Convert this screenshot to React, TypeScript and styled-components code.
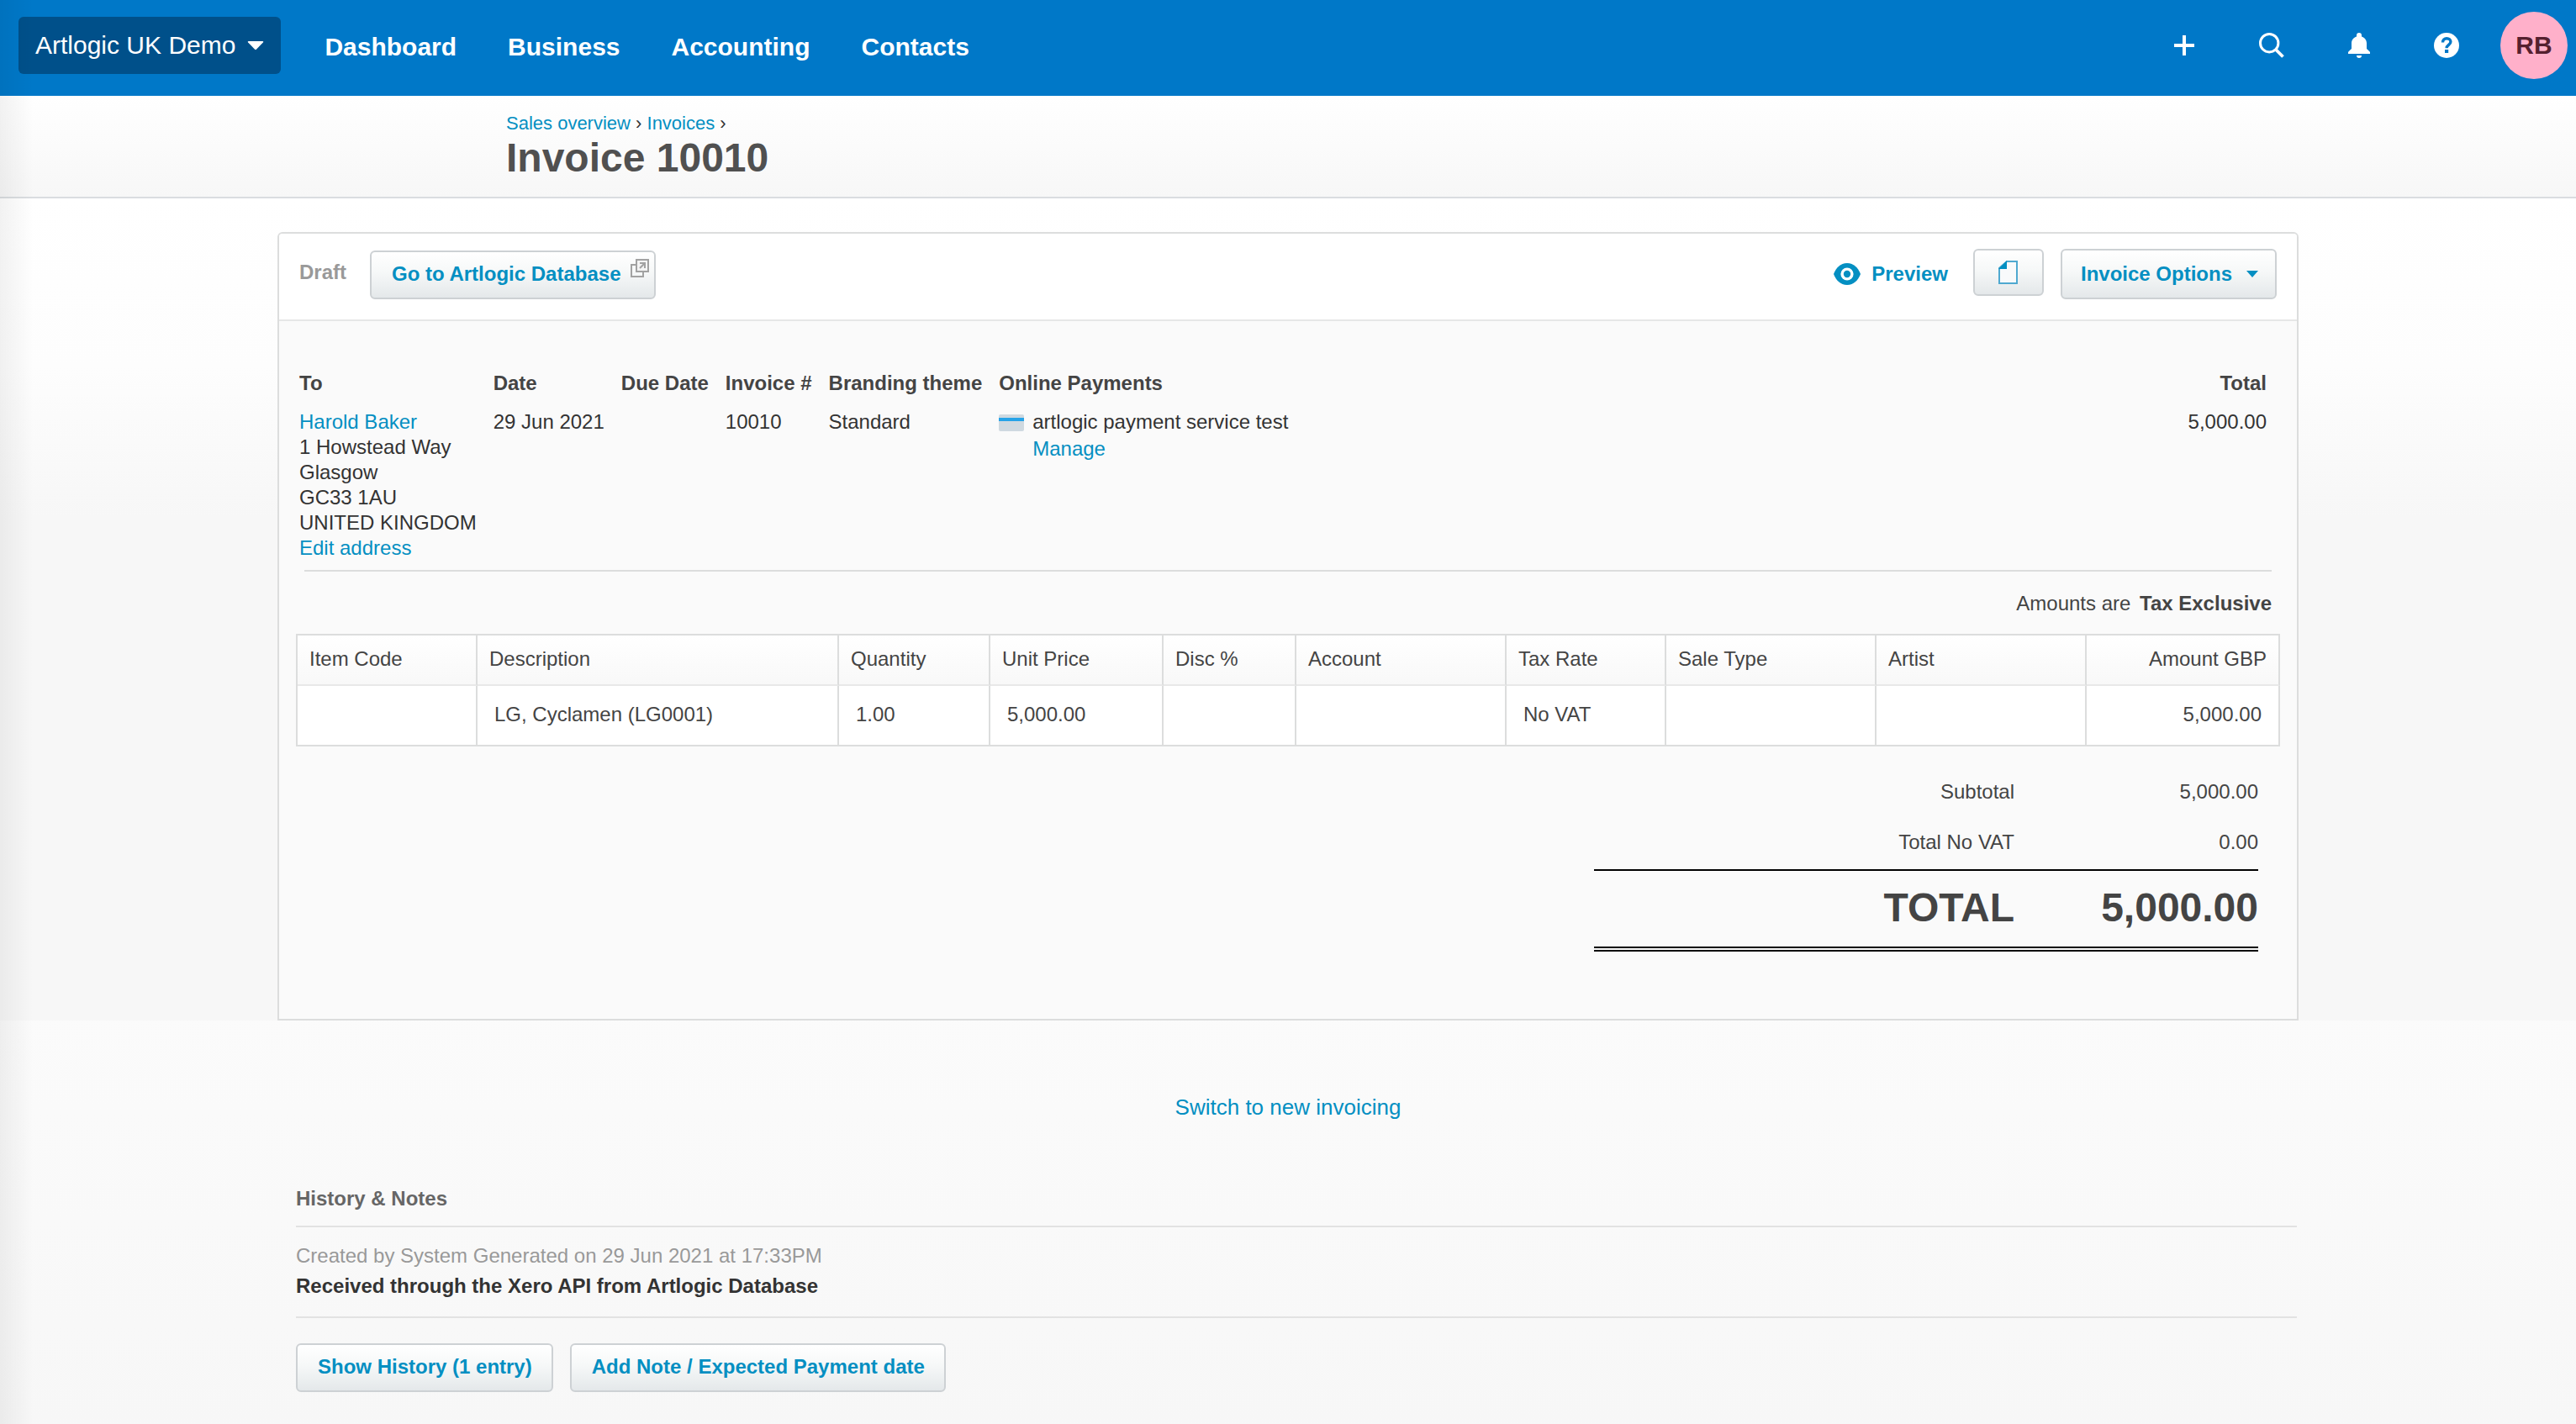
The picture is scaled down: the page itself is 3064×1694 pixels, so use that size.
import React from "react";
import styled, { createGlobalStyle, css } from "styled-components";

const sans = `"Liberation Sans", Arial, Helvetica, sans-serif`;
const blue = "#048fc2";
const line = "#dcdddd";

const Global = createGlobalStyle`
  *, *::before, *::after { box-sizing: border-box; }
  body {
    margin: 0;
    background: #f8f8f8;
    color: #333;
    font: 24px/30px ${sans};
  }
  button { font: inherit; cursor: pointer; }
  a { color: ${blue}; text-decoration: none; }
  h1, h2, p, ul { margin: 0; padding: 0; }
`;

const Page = styled.div`
  position: relative;
  min-height: 100vh;
  background: linear-gradient(#fbfbfb 1200px, #f7f7f7 1700px);
`;

const EdgeShade = styled.div`
  position: absolute;
  inset: 0 auto 0 0;
  width: 40px;
  background: linear-gradient(90deg, rgba(0, 0, 0, 0.05), rgba(0, 0, 0, 0));
  pointer-events: none;
`;

const Header = styled.header`
  display: flex;
  align-items: center;
  height: 114px;
  padding: 0 10px 6px 22px;
  background: #0078c8;
  color: #fff;
  font-size: 30px;
`;

const OrgButton = styled.button`
  display: flex;
  align-items: center;
  gap: 14px;
  height: 68px;
  padding: 0 20px;
  border: 0;
  border-radius: 6px;
  background: #00508a;
  color: #fff;
`;

const Nav = styled.nav`
  display: flex;
  gap: 61px;
  flex: 1;
  margin-left: 52px;
  padding-top: 4px;
`;

const NavLink = styled.a`
  color: #fff;
  font-weight: 700;
`;

const IconButton = styled.button`
  display: flex;
  align-items: center;
  justify-content: center;
  width: 104px;
  height: 80px;
  padding: 0;
  border: 0;
  background: none;
  color: #fff;
`;

const Avatar = styled.button`
  width: 80px;
  height: 80px;
  margin-left: 12px;
  padding: 0;
  border: 0;
  border-radius: 50%;
  background: #ffb0ca;
  color: #55202f;
  font-weight: 700;
`;

const TitleBar = styled.div`
  padding: 18px 0 22px;
  border-bottom: 2px solid #dadde0;
  background: linear-gradient(#fff, #f7f7f7);
`;

const TitleInner = styled.div`
  max-width: 1860px;
  margin: 0 auto;
`;

const Crumbs = styled.nav`
  padding-bottom: 2px;
  color: #333;
  font-size: 22px;
`;

const Title = styled.h1`
  color: #505050;
  font-size: 48px;
  line-height: 48px;
`;

const Workspace = styled.main`
  padding-top: 40px;
  background: linear-gradient(#fff, #fdfdfd 200px, #f7f7f7 380px);
`;

const Card = styled.section`
  max-width: 2404px;
  margin: 0 auto;
  border: 2px solid ${line};
  border-radius: 6px 6px 0 0;
  background: #fafafa;
`;

const Toolbar = styled.div`
  display: flex;
  justify-content: space-between;
  padding: 18px 24px 24px;
  border-bottom: 2px solid #e6e7e7;
  border-radius: 4px 4px 0 0;
  background: #fff;
`;

const ToolGroup = styled.div<{ $gap: number }>`
  display: flex;
  align-items: flex-start;
  gap: ${(p) => p.$gap}px;
`;

const Status = styled.span`
  align-self: center;
  padding-bottom: 4px;
  color: #999;
  font-weight: 700;
`;

const buttonFace = css`
  display: inline-flex;
  align-items: center;
  justify-content: center;
  border: 2px solid #cdd1d4;
  border-radius: 6px;
  background: linear-gradient(#fff, #f6f8f8 45%, #e4e8ea);
  color: ${blue};
  font-weight: 700;
`;

const Button = styled.button`
  ${buttonFace}
  height: 58px;
  padding: 0 23px 2px 24px;
`;

const DatabaseLink = styled.a`
  ${buttonFace}
  align-self: flex-end;
  align-items: flex-start;
  gap: 11px;
  height: 58px;
  padding: 8px 6px 0 24px;
`;

const DatabaseLabel = styled.span`
  padding-top: 3px;
`;

const OptionsButton = styled.button`
  ${buttonFace}
  gap: 17px;
  height: 60px;
  padding: 0 20px 0 22px;
`;

const FileButton = styled.button`
  ${buttonFace}
  width: 84px;
  height: 56px;
  padding: 0;
`;

const PreviewLink = styled.a`
  display: flex;
  align-items: center;
  gap: 13px;
  height: 60px;
  margin-right: 10px;
  font-weight: 700;
`;

const CardBody = styled.div`
  padding: 59px 20px 80px;
`;

const InfoWrap = styled.div`
  padding: 0 16px 11px 4px;
`;

const InfoTable = styled.table`
  width: 100%;
  border-spacing: 0;
  th, td {
    padding: 0 20px 0 0;
    text-align: left;
    vertical-align: top;
    white-space: nowrap;
  }
  th { padding-bottom: 16px; color: #444; }
  th:last-child, td:last-child { width: 100%; padding-right: 0; text-align: right; }
`;

const Address = styled.address`
  display: flex;
  flex-direction: column;
  font-style: normal;
`;

const Payment = styled.div`
  display: grid;
  grid-template-columns: 30px auto;
  justify-content: start;
  column-gap: 10px;
  row-gap: 2px;
  a { grid-column: 2; }
`;

const PayIcon = styled.span`
  width: 30px;
  height: 20px;
  margin-top: 6px;
  border-radius: 2px;
  background: linear-gradient(#cfd9e0 4px, #26a3e8 4px 8px, #cfd9e0 8px);
`;

const TaxNote = styled.p`
  margin: 0 10px;
  padding: 23px 0 21px;
  border-top: 2px solid ${line};
  color: #444;
  text-align: right;
  b { margin-left: 4px; }
`;

const Items = styled.table`
  width: 100%;
  table-layout: fixed;
  border-spacing: 0;
  border: solid ${line};
  border-width: 2px 0 0 2px;
  color: #444;
  th, td {
    border-right: 2px solid ${line};
    border-bottom: 2px solid ${line};
    text-align: left;
  }
  thead { background: linear-gradient(#fff, #f8f8f8); }
  tbody { background: #fff; }
  th { padding: 13px 14px 15px; border-bottom-color: #e8e8e8; font-weight: 400; }
  td { height: 72px; padding: 19px 20px 21px; }
  th:last-child, td:last-child { text-align: right; }
`;

const Col = styled.col<{ $w?: number }>`
  width: ${(p) => (p.$w ? `${p.$w}px` : "auto")};
`;

const Totals = styled.table`
  width: 790px;
  margin: 24px 26px 0 auto;
  border-spacing: 0;
  color: #444;
  th, td { padding: 15px 0; font-weight: 400; text-align: right; }
  td { width: 290px; }
  tbody tr:last-child > * { padding-bottom: 17px; }
  tfoot th, tfoot td {
    padding: 16px 0 18px;
    border-top: 2px solid #000;
    border-bottom: 6px double #000;
    font-size: 48px;
    line-height: 56px;
    font-weight: 700;
  }
`;

const Switcher = styled.p`
  padding: 88px 0 79px;
  font-size: 26px;
  text-align: center;
`;

const History = styled.section`
  max-width: 2404px;
  margin: 0 auto;
  padding: 0 2px 38px 22px;
`;

const HistoryTitle = styled.h2`
  padding-bottom: 17px;
  border-bottom: 2px solid #e2e2e2;
  color: #666;
  font-size: 24px;
  line-height: 30px;
`;

const Entry = styled.div`
  padding: 16px 0 18px;
  border-bottom: 2px solid #e2e2e2;
  line-height: 36px;
`;

const Meta = styled.p`
  color: #999;
`;

const Note = styled.p`
  font-weight: 700;
`;

const Actions = styled.div`
  display: flex;
  gap: 20px;
  padding-top: 30px;
`;

const columns: { label: string; value: string; width?: number }[] = [
  { label: "Item Code", value: "", width: 214 },
  { label: "Description", value: "LG, Cyclamen (LG0001)" },
  { label: "Quantity", value: "1.00", width: 180 },
  { label: "Unit Price", value: "5,000.00", width: 206 },
  { label: "Disc %", value: "", width: 158 },
  { label: "Account", value: "", width: 250 },
  { label: "Tax Rate", value: "No VAT", width: 190 },
  { label: "Sale Type", value: "", width: 250 },
  { label: "Artist", value: "", width: 250 },
  { label: "Amount GBP", value: "5,000.00", width: 230 },
];

const Caret = () => (
  <svg width="20" height="12" viewBox="0 0 20 12" aria-hidden="true">
    <path d="M1.5 1h17a.8.8 0 0 1 .6 1.3l-8.2 8.4a1.3 1.3 0 0 1-1.8 0L.9 2.3A.8.8 0 0 1 1.5 1z" fill="#fff" />
  </svg>
);

const PlusIcon = () => (
  <svg width="24" height="24" viewBox="0 0 24 24" aria-hidden="true">
    <path d="M10 0h4v10h10v4H14v10h-4V14H0v-4h10z" fill="currentColor" />
  </svg>
);

const SearchIcon = () => (
  <svg width="30" height="30" viewBox="0 0 30 30" aria-hidden="true">
    <circle cx="12.2" cy="12.2" r="10.7" fill="none" stroke="currentColor" strokeWidth="3" />
    <path d="M19.5 19.5l9 9" stroke="currentColor" strokeWidth="3.8" />
  </svg>
);

const BellIcon = () => (
  <svg width="26" height="30" viewBox="0 0 26 30" aria-hidden="true">
    <path
      d="M13 0a3 3 0 0 1 3 3v1.6c3.6 1.2 6 4 6 8V19l3.4 3.2c.4.4.6.8.6 1.3V25H0v-1.5c0-.5.2-.9.6-1.3L4 19v-6.4c0-4 2.4-6.8 6-8V3a3 3 0 0 1 3-3zM10 27h6a3 3 0 0 1-6 0z"
      fill="currentColor"
    />
  </svg>
);

const HelpIcon = () => (
  <svg width="30" height="30" viewBox="0 0 30 30" aria-hidden="true">
    <circle cx="15" cy="15" r="15" fill="#fff" />
    <path d="M10.5 11.5c0-3 2-4.8 4.7-4.8 2.8 0 4.7 1.700 4.7 4.100 0 3.500-4.800 3.600-4.800 7.400" fill="none" stroke="#0078c8" strokeWidth="3.4" />
    <path d="M13 20h4.200v4H13z" fill="#0078c8" />
  </svg>
);

const ExternalIcon = () => (
  <svg width="22" height="22" viewBox="0 0 22 22" aria-hidden="true" fill="none" stroke="#a2a2a2" strokeWidth="2">
    <path d="M6 7H1v14h14v-5" />
    <path d="M7 1h14v14H7z" fill="#f4f4f4" />
    <path d="M11 5h6v6M17 5l-6 6" />
  </svg>
);

const EyeIcon = () => (
  <svg width="32" height="26" viewBox="0 0 32 26" aria-hidden="true">
    <path d="M16 0c8 0 13 5.5 16 13-3 7.5-8 13-16 13S3 20.5 0 13C3 5.5 8 0 16 0z" fill="#048fc2" />
    <circle cx="16" cy="13" r="7.6" fill="#fff" />
    <circle cx="16" cy="13" r="4.2" fill="#048fc2" />
  </svg>
);

const FileIcon = () => (
  <svg width="24" height="28" viewBox="0 0 24 28" aria-hidden="true">
    <path d="M10 1h12v26H1V9z" fill="#f8fafb" stroke="#4fa9d0" strokeWidth="2" />
    <path d="M10 0v10H0z" fill="#048fc2" />
  </svg>
);

const SmallCaret = () => (
  <svg width="14" height="8" viewBox="0 0 14 8" aria-hidden="true">
    <path d="M0 0h14L7 8z" fill="#048fc2" />
  </svg>
);

export default function App() {
  return (
    <Page>
      <Global />
      <Header>
        <OrgButton type="button">
          Artlogic UK Demo
          <Caret />
        </OrgButton>
        <Nav aria-label="Main">
          {["Dashboard", "Business", "Accounting", "Contacts"].map((name) => (
            <NavLink key={name} href="#">{name}</NavLink>
          ))}
        </Nav>
        <IconButton type="button" aria-label="Create new"><PlusIcon /></IconButton>
        <IconButton type="button" aria-label="Search"><SearchIcon /></IconButton>
        <IconButton type="button" aria-label="Notifications"><BellIcon /></IconButton>
        <IconButton type="button" aria-label="Help"><HelpIcon /></IconButton>
        <Avatar type="button">RB</Avatar>
      </Header>

      <TitleBar>
        <TitleInner>
          <Crumbs aria-label="Breadcrumb">
            <a href="#">Sales overview</a> › <a href="#">Invoices</a> ›
          </Crumbs>
          <Title>Invoice 10010</Title>
        </TitleInner>
      </TitleBar>

      <Workspace>
        <Card>
          <Toolbar>
            <ToolGroup $gap={28}>
              <Status>Draft</Status>
              <DatabaseLink href="#">
                <DatabaseLabel>Go to Artlogic Database</DatabaseLabel>
                <ExternalIcon />
              </DatabaseLink>
            </ToolGroup>
            <ToolGroup $gap={20}>
              <PreviewLink href="#"><EyeIcon />Preview</PreviewLink>
              <FileButton type="button" aria-label="Files"><FileIcon /></FileButton>
              <OptionsButton type="button">Invoice Options<SmallCaret /></OptionsButton>
            </ToolGroup>
          </Toolbar>

          <CardBody>
            <InfoWrap>
              <InfoTable>
                <thead>
                  <tr>
                    <th>To</th>
                    <th>Date</th>
                    <th>Due Date</th>
                    <th>Invoice #</th>
                    <th>Branding theme</th>
                    <th>Online Payments</th>
                    <th>Total</th>
                  </tr>
                </thead>
                <tbody>
                  <tr>
                    <td>
                      <Address>
                        <a href="#">Harold Baker</a>
                        <span>1 Howstead Way</span>
                        <span>Glasgow</span>
                        <span>GC33 1AU</span>
                        <span>UNITED KINGDOM</span>
                        <a href="#">Edit address</a>
                      </Address>
                    </td>
                    <td>29 Jun 2021</td>
                    <td />
                    <td>10010</td>
                    <td>Standard</td>
                    <td>
                      <Payment>
                        <PayIcon />
                        <span>artlogic payment service test</span>
                        <a href="#">Manage</a>
                      </Payment>
                    </td>
                    <td>5,000.00</td>
                  </tr>
                </tbody>
              </InfoTable>
            </InfoWrap>

            <TaxNote>
              Amounts are <b>Tax Exclusive</b>
            </TaxNote>

            <Items>
              <colgroup>
                {columns.map((c) => <Col key={c.label} $w={c.width} />)}
              </colgroup>
              <thead>
                <tr>{columns.map((c) => <th key={c.label}>{c.label}</th>)}</tr>
              </thead>
              <tbody>
                <tr>{columns.map((c) => <td key={c.label}>{c.value}</td>)}</tr>
              </tbody>
            </Items>

            <Totals>
              <tbody>
                <tr><th scope="row">Subtotal</th><td>5,000.00</td></tr>
                <tr><th scope="row">Total No VAT</th><td>0.00</td></tr>
              </tbody>
              <tfoot>
                <tr><th scope="row">TOTAL</th><td>5,000.00</td></tr>
              </tfoot>
            </Totals>
          </CardBody>
        </Card>
      </Workspace>

      <Switcher><a href="#">Switch to new invoicing</a></Switcher>

      <History>
        <HistoryTitle>History &amp; Notes</HistoryTitle>
        <Entry>
          <Meta>Created by System Generated on 29 Jun 2021 at 17:33PM</Meta>
          <Note>Received through the Xero API from Artlogic Database</Note>
        </Entry>
        <Actions>
          <Button type="button">Show History (1 entry)</Button>
          <Button type="button">Add Note / Expected Payment date</Button>
        </Actions>
      </History>
      <EdgeShade />
    </Page>
  );
}
